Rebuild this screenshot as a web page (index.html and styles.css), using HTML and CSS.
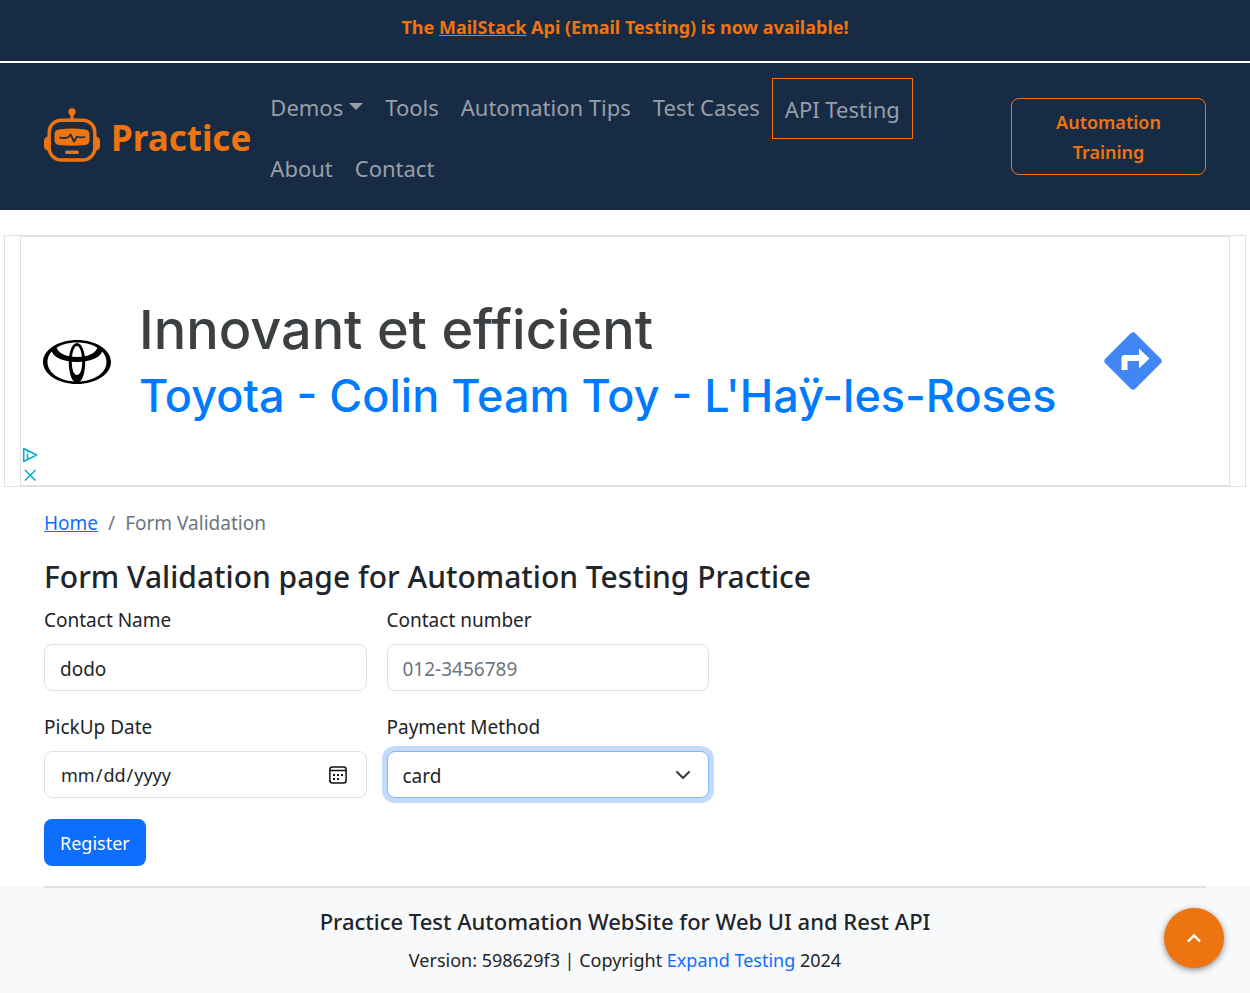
FILE: index.html
```html
<!DOCTYPE html>
<html lang="en">
<head>
<meta charset="utf-8">
<meta name="viewport" content="width=device-width, initial-scale=1">
<title>Form Validation page for Automation Testing Practice</title>
<link rel="stylesheet" href="styles.css">
</head>
<body>
<div class="announcement">The <a href="#">MailStack</a> Api (Email Testing) is now available!</div>
<header class="navbar">
  <a class="brand" href="#">
    <svg class="brand-icon" viewBox="0 0 56 54" aria-hidden="true">
      <g fill="none" stroke="#ee7411" stroke-width="3.4">
        <rect x="5.2" y="12.2" width="45.6" height="39.8" rx="12"/>
        <path d="M28 5v7"/>
      </g>
      <g fill="#ee7411">
        <circle cx="28" cy="3.8" r="3.6"/>
        <path d="M5 28v15C1.500 42.500 0 40.500 0 38v-5c0-2.500 1.500-4.500 5-5zM51 28v15c3.500-.500 5-2.500 5-5v-5c0-2.500-1.500-4.500-5-5z"/>
        <path d="M15 21.500q13-2 26 0 4.500.600 4.500 5v5.500q0 4.400-4.500 5-13 1.500-26 0-4.500-.600-4.500-5v-5.500q0-4.400 4.500-5z"/>
        <rect x="21" y="42.500" width="14" height="3.600" rx="1.800"/>
      </g>
      <path d="M16 29.500q4 1.500 8.500-.500l2-2.500 3.500 7 3-5q4 1.500 7.500.500" fill="none" stroke="#182b44" stroke-width="1.700" stroke-linecap="round" stroke-linejoin="round"/>
    </svg>
    <span>Practice</span>
  </a>
  <nav class="nav" aria-label="Main">
    <a class="nav-link dropdown" href="#">Demos</a>
    <a class="nav-link" href="#">Tools</a>
    <a class="nav-link" href="#">Automation Tips</a>
    <a class="nav-link" href="#">Test Cases</a>
    <a class="nav-link boxed" href="#">API Testing</a>
    <a class="nav-link" href="#">About</a>
    <a class="nav-link" href="#">Contact</a>
  </nav>
  <a class="training" href="#">Automation Training</a>
</header>

<aside class="ad-frame" aria-label="Advertisement">
  <div class="ad">
    <svg class="ad-logo" viewBox="0 0 68 44" aria-label="Toyota" role="img">
      <path fill-rule="evenodd" d="M34 0C53 0 68 9.800 68 22S53 44 34 44 0 34.200 0 22 15 0 34 0zM34 2.500C17 2.500 4.500 11 4.500 22s12.500 19.500 29.500 19.500S63.500 33 63.500 22 51 2.500 34 2.500z"/>
      <path fill-rule="evenodd" d="M34 3c4.800 0 8.200 8.500 8.200 19.500S38.800 43 34 43s-8.200-9.500-8.200-20.500S29.200 3 34 3zm0 3c-3 0-5.200 7-5.200 15.500S31 35 34 35s5.200-5 5.200-13.500S37 6 34 6z"/>
      <path d="M8 9l4.500-3.500C15 13.500 23 17 34 17s19-3.500 21.500-11.500L60 9C59 17 48 22 34 22S9 17 8 9z"/>
    </svg>
    <div class="ad-copy">
      <div class="ad-title">Innovant et efficient</div>
      <a class="ad-link" href="#">Toyota - Colin Team Toy - L'Haÿ-les-Roses</a>
    </div>
    <svg class="ad-direction" viewBox="0 0 58 58" aria-label="Directions" role="img">
      <path fill="#4285f4" d="M26.500 1.500q2.500-2.500 5 0l25 25q2.500 2.500 0 5l-25 25q-2.500 2.500-5 0l-25-25q-2.500-2.500 0-5z"/>
      <path fill="#fff" d="M17.500 38V26q0-3 3-3H35v-6.500L45.500 26.500 35 36.500V29H23.500v9z"/>
    </svg>
    <div class="ad-controls">
      <svg viewBox="0 0 16 16" width="16" height="16" aria-hidden="true"><path d="M1.700 1.500v13l3-1.500L14.500 8zM5.500 7v5" fill="none" stroke="#00aecd" stroke-width="1.600" stroke-linejoin="round"/><path d="M5.500 4.300v1.500" stroke="#00aecd" stroke-width="1.600"/></svg>
      <svg viewBox="0 0 16 16" width="16" height="16" aria-hidden="true"><path d="M3 3l10.500 10.500M13.500 3L3 13.500" fill="none" stroke="#00aecd" stroke-width="1.500"/></svg>
    </div>
  </div>
</aside>

<main class="container">
  <nav class="breadcrumb" aria-label="Breadcrumb">
    <a href="#">Home</a><span>/</span><span>Form Validation</span>
  </nav>
  <h1>Form Validation page for Automation Testing Practice</h1>
  <form class="form">
    <div class="field">
      <label for="name">Contact Name</label>
      <input class="control" id="name" type="text" value="dodo">
    </div>
    <div class="field">
      <label for="number">Contact number</label>
      <input class="control" id="number" type="tel" placeholder="012-3456789">
    </div>
    <div class="field">
      <label for="date">PickUp Date</label>
      <input class="control date" id="date" type="date">
    </div>
    <div class="field">
      <label for="payment">Payment Method</label>
      <select class="control select" id="payment">
        <option>card</option>
        <option>cash on delivery</option>
      </select>
    </div>
    <button class="submit" type="button">Register</button>
  </form>
</main>

<footer class="footer">
  <div class="footer-inner">
    <h2>Practice Test Automation WebSite for Web UI and Rest API</h2>
    <p>Version: 598629f3 | Copyright <a href="#">Expand Testing</a> 2024</p>
  </div>
</footer>
<button class="to-top" type="button" aria-label="Back to top">
  <svg viewBox="0 0 14 10" width="14" height="10" aria-hidden="true"><path d="M1 8.500l6-6 6 6" fill="none" stroke="#fff" stroke-width="2.400"/></svg>
</button>
</body>
</html>
```
FILE: styles.css
```css
* { box-sizing: border-box; }

body {
  margin: 0;
  min-height: 100vh;
  display: flex;
  flex-direction: column;
  background: #fff;
  color: #212529;
  font: 18px/30px "Noto Sans", "Open Sans", sans-serif;
}

a { color: #0d6efd; }

.announcement {
  padding: 12px 16px 19px;
  border-bottom: 2px solid #fff;
  background: #182b44;
  color: #ee7411;
  text-align: center;
  font-weight: 700;
}
.announcement a { color: inherit; }

.navbar {
  display: flex;
  align-items: center;
  padding: 10px 44px 8px;
  background: #182b44;
}
.brand {
  display: flex;
  align-items: center;
  gap: 11px;
  margin-right: 9px;
  color: #ee7411;
  font-size: 35px;
  font-weight: 700;
  line-height: 58px;
  text-decoration: none;
}
.brand-icon { width: 56px; height: 54px; margin-bottom: 6px; }
.nav {
  flex: 1;
  display: flex;
  flex-wrap: wrap;
  align-items: flex-start;
  column-gap: 2px;
  margin-right: 60px;
  padding: 5px 0;
}
.nav-link {
  padding: 10px;
  color: #989fa9;
  font-size: 22px;
  line-height: 38px;
  text-decoration: none;
}
.nav-link.boxed {
  padding: 12px 12px 10px;
  border: 1px solid #ee7411;
  line-height: 37px;
}
.dropdown::after {
  content: "";
  display: inline-block;
  margin-left: 6px;
  vertical-align: 6px;
  border: 7px solid transparent;
  border-top-color: currentColor;
  border-bottom: 0;
}
.training {
  width: 195px;
  margin-bottom: 2px;
  padding: 8px 30px 7px;
  border: 1px solid #ee7411;
  border-radius: 8px;
  color: #ee7411;
  font-weight: 600;
  text-align: center;
  text-decoration: none;
}

.ad-frame {
  margin: 25px 4px 0;
  padding: 0 15px;
  border: 1px solid #dee2e6;
}
.ad {
  position: relative;
  display: flex;
  align-items: center;
  height: 250px;
  padding: 0 67px 0 22px;
  border: 1px solid #e0e0e0;
}
.ad-logo { width: 68px; height: 44px; margin: 2px 28px 0 0; }
.ad-copy { flex: 1; padding-top: 3px; white-space: nowrap; }
.ad-title {
  color: #3c4043;
  font: 500 54px/66px "Inter", sans-serif;
}
.ad-link {
  display: block;
  color: #007bff;
  font: 500 45px/66px "Inter", sans-serif;
  text-decoration: none;
}
.ad-direction { width: 58px; height: 58px; }
.ad-controls {
  position: absolute;
  left: 1px;
  bottom: 2px;
  display: grid;
  gap: 4px;
}

.container { padding: 21px 44px 20px; }
.breadcrumb { display: flex; gap: 10px; color: #6c757d; font-size: 19px; }
h1 {
  margin: 20px 0 9px;
  font-size: 30px;
  font-weight: 500;
  line-height: 38px;
}
.form {
  display: grid;
  grid-template-columns: 1fr 1fr;
  gap: 21px 20px;
  max-width: 665px;
}
label { display: block; margin-bottom: 9px; font-size: 19px; }
.control {
  display: block;
  width: 100%;
  height: 47px;
  padding: 2px 15px 0;
  border: 1px solid #dee2e6;
  border-radius: 8px;
  background-color: #fff;
  color: #212529;
  font: inherit;
  font-size: 19px;
}
.control::placeholder { color: #6c757d; }
.date { padding-top: 0; font-size: 18px; }
.date::-webkit-datetime-edit-fields-wrapper { padding: 0; }
.date::-webkit-calendar-picker-indicator {
  width: 20px;
  height: 20px;
  margin-right: 3px;
  padding: 0;
  background: url("data:image/svg+xml,%3Csvg xmlns='http://www.w3.org/2000/svg' viewBox='0 0 20 20'%3E%3Crect x='1.900' y='1.900' width='16.200' height='16.200' rx='2.500' fill='none' stroke='%23111' stroke-width='1.500'/%3E%3Cpath d='M2 5.500h16' stroke='%23111' stroke-width='1.500'/%3E%3Cpath d='M5 9h2v2H5zM9 9h2v2H9zM13 9h2v2h-2zM5 13h2v2H5zM9 13h2v2H9z' fill='%23111'/%3E%3C/svg%3E") center / 20px no-repeat;
}
.select {
  appearance: none;
  border-color: #86b7fe;
  outline: none;
  box-shadow: 0 0 0 5px #c2dbfe;
  background-image: url("data:image/svg+xml,%3Csvg xmlns='http://www.w3.org/2000/svg' viewBox='0 0 16 16'%3E%3Cpath fill='none' stroke='%23343a40' stroke-linecap='round' stroke-linejoin='round' stroke-width='2' d='m2 5 6 6 6-6'/%3E%3C/svg%3E");
  background-position: right 17px center;
  background-repeat: no-repeat;
  background-size: 16px;
}
.submit {
  justify-self: start;
  height: 47px;
  padding: 0 16px;
  border: 0;
  border-radius: 8px;
  background: #0d6efd;
  color: #fff;
  font: inherit;
}

.footer { flex: 1; padding: 0 44px; background: #f8f9fa; }
.footer-inner { padding: 18px 0; border-top: 2px solid #dee2e6; text-align: center; }
h2 { margin: 0 0 9px; font-size: 22px; font-weight: 500; line-height: 30px; }
p { margin: 0; }
.footer a { text-decoration: none; }
.to-top {
  position: fixed;
  right: 26px;
  bottom: 25px;
  display: grid;
  place-items: center;
  width: 60px;
  height: 60px;
  padding: 0;
  border: 0;
  border-radius: 50%;
  background: #ee7411;
  box-shadow: 0 2px 6px rgba(0, 0, 0, 0.45);
}
```
